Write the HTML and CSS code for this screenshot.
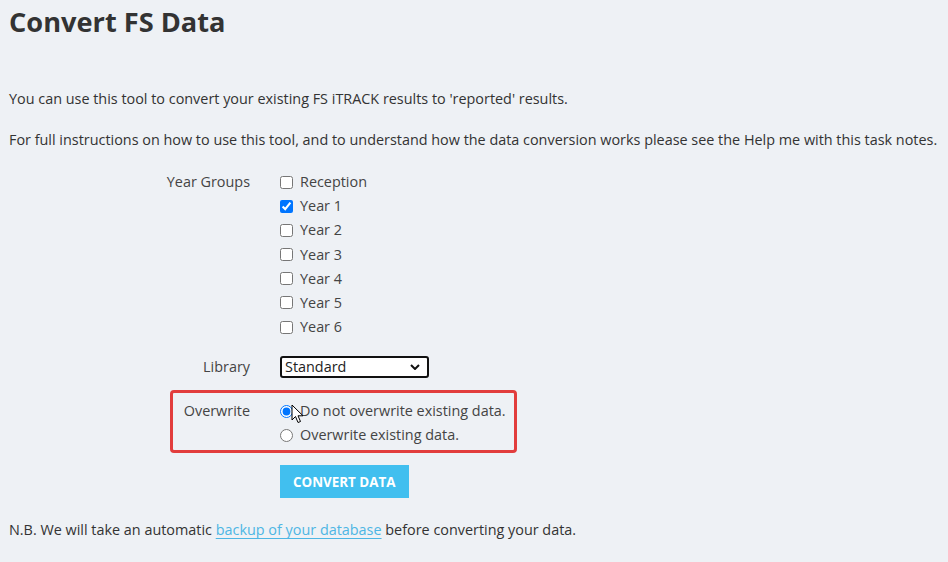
FILE: index.html
```html
<!DOCTYPE html>
<html lang="en">
<head>
  <meta charset="UTF-8" />
  <meta name="viewport" content="width=device-width, initial-scale=1.0" />
  <title>Convert FS Data</title>
  <link rel="stylesheet" href="styles.css">
</head>
<body>
  <h1 class="title">Convert FS Data</h1>

  <div class="intro">
    <p>You can use this tool to convert your existing FS iTRACK results to 'reported' results.</p>
    <p>For full instructions on how to use this tool, and to understand how the data conversion works please see the Help me with this task notes.</p>
  </div>

  <form class="convert-form" onsubmit="return false">
    <div class="row">
      <div class="label">Year Groups</div>
      <div class="field">
        <label class="option"><input type="checkbox"> Reception</label>
        <label class="option"><input type="checkbox" checked> Year 1</label>
        <label class="option"><input type="checkbox"> Year 2</label>
        <label class="option"><input type="checkbox"> Year 3</label>
        <label class="option"><input type="checkbox"> Year 4</label>
        <label class="option"><input type="checkbox"> Year 5</label>
        <label class="option"><input type="checkbox"> Year 6</label>
      </div>
    </div>

    <div class="row library">
      <div class="label">Library</div>
      <div class="field">
        <div class="select-wrap">
          <select class="select">
            <option>Standard</option>
          </select>
          <svg class="chevron" width="10" height="6" viewBox="0 0 10 6">
            <path d="M1 1 L5 5 L9 1" fill="none" stroke="#111" stroke-width="2"/>
          </svg>
        </div>
      </div>
    </div>

    <div class="row overwrite">
      <div class="label">Overwrite</div>
      <div class="field">
        <label class="option radio"><input type="radio" name="ow" checked> Do not overwrite existing data.</label>
        <label class="option radio"><input type="radio" name="ow"> Overwrite existing data.</label>
      </div>
      <svg class="cursor" width="14" height="21" viewBox="0 0 14 21">
        <path d="M1 1 L1 16 L4.5 12.5 L7 18.5 L9.5 17.5 L7 11.8 L12 11.8 Z" fill="#fff" stroke="#000" stroke-width="1" stroke-linejoin="round"/>
      </svg>
    </div>

    <div class="row actions">
      <div></div>
      <div class="field">
        <button type="submit" class="btn">CONVERT DATA</button>
      </div>
    </div>
  </form>

  <p class="note">N.B. We will take an automatic <a href="#">backup of your database</a> before converting your data.</p>
</body>
</html>
```

FILE: styles.css
```css
body {
  font-family: 'Open Sans', sans-serif;
  font-size: 14.4px;
  line-height: 20px;
  color: #333;
  background-color: #eef1f5;
  margin: 0;
  padding: 0 9px;
}
.title {
  font-size: 27.2px;
  line-height: 36px;
  font-weight: 700;
  color: #333;
  margin: 4px 0 0;
}
.intro {
  margin: 49px 0 20px;
}
.intro p {
  margin: 0;
}
.intro p + p {
  margin-top: 21px;
}
.row {
  display: grid;
  grid-template-columns: 241px 1fr;
  column-gap: 30px;
}
.label {
  text-align: right;
  color: #444;
  line-height: 24px;
}
.option {
  display: flex;
  align-items: center;
  gap: 7px;
  height: 24.17px;
  color: #444;
}
.option input {
  margin: 0;
  width: 13px;
  height: 13px;
}
.library {
  margin-top: 16px;
  align-items: center;
}
.select-wrap {
  position: relative;
  width: 149px;
}
.select {
  appearance: none;
  -webkit-appearance: none;
  display: block;
  width: 149px;
  height: 22px;
  border: 2px solid #111;
  border-radius: 3px;
  background: #fff;
  font-family: 'Open Sans', sans-serif;
  font-size: 14.4px;
  line-height: 18px;
  color: #222;
  padding: 0 0 1px 3px;
}
.chevron {
  position: absolute;
  right: 9px;
  top: 8px;
  pointer-events: none;
}
.overwrite {
  margin-top: 20px;
  position: relative;
}
.overwrite .option {
  height: 24px;
}
.overwrite::before {
  content: '';
  position: absolute;
  left: 161px;
  top: -9px;
  width: 347px;
  height: 63px;
  box-sizing: border-box;
  border: 3px solid #e23d3d;
  border-radius: 4px;
}
.cursor {
  position: absolute;
  left: 282px;
  top: 5px;
}
.actions {
  margin-top: 18px;
}
.btn {
  background: #41bfef;
  color: #fff;
  font-family: 'Open Sans', sans-serif;
  font-weight: 700;
  font-size: 13.4px;
  height: 33px;
  padding: 0 13px;
  border: none;
  cursor: pointer;
}
.note {
  margin: 22px 0 0;
}
.note a {
  color: #4db6e4;
  text-decoration: underline;
  text-underline-offset: 3px;
}
```
